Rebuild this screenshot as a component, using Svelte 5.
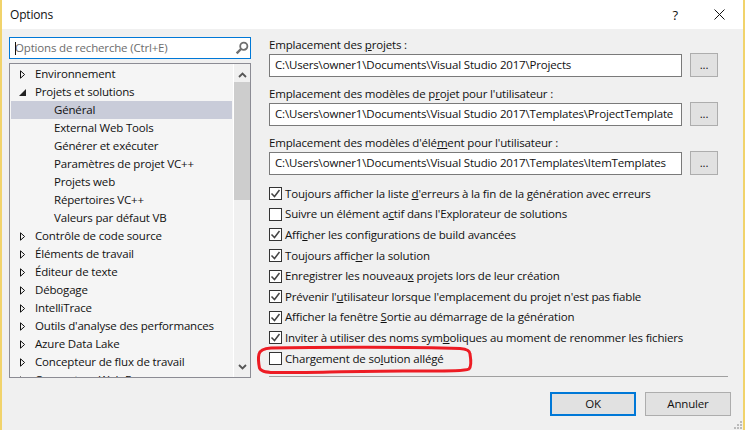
<script>
  const tree = [
    { t: 'Environnement', k: 'c' },
    { t: 'Projets et solutions', k: 'o' },
    { t: 'Général', k: 'l', s: true },
    { t: 'External Web Tools', k: 'l' },
    { t: 'Générer et exécuter', k: 'l' },
    { t: 'Paramètres de projet VC++', k: 'l' },
    { t: 'Projets web', k: 'l' },
    { t: 'Répertoires VC++', k: 'l' },
    { t: 'Valeurs par défaut VB', k: 'l' },
    { t: 'Contrôle de code source', k: 'c' },
    { t: 'Éléments de travail', k: 'c' },
    { t: 'Éditeur de texte', k: 'c' },
    { t: 'Débogage', k: 'c' },
    { t: 'IntelliTrace', k: 'c' },
    { t: "Outils d'analyse des performances", k: 'c' },
    { t: 'Azure Data Lake', k: 'c' },
    { t: 'Concepteur de flux de travail', k: 'c' },
    { t: 'Concepteur Web Forms', k: 'c' }
  ];
  const paths = [
    { a: 'Emplacement des ', u: 'p', b: 'rojets :', v: 'C:\\Users\\owner1\\Documents\\Visual Studio 2017\\Projects' },
    { a: 'Emplacement des modèles de p', u: 'r', b: "ojet pour l'utilisateur :", v: 'C:\\Users\\owner1\\Documents\\Visual Studio 2017\\Templates\\ProjectTemplate' },
    { a: "Emplacement des modèles d'élé", u: 'm', b: "ent pour l'utilisateur :", v: 'C:\\Users\\owner1\\Documents\\Visual Studio 2017\\Templates\\ItemTemplates' }
  ];
  const checks = [
    { a: 'Toujours afficher la liste ', u: 'd', b: "'erreurs à la fin de la génération avec erreurs", c: true },
    { a: 'Suivre un élément a', u: 'c', b: "tif dans l'Explorateur de solutions", c: false },
    { a: 'Affi', u: 'c', b: 'her les configurations de build avancées', c: true },
    { a: 'Toujours affic', u: 'h', b: 'er la solution', c: true },
    { a: 'Enregistrer les nouveau', u: 'x', b: ' projets lors de leur création', c: true },
    { a: "Prévenir l'", u: 'u', b: "tilisateur lorsque l'emplacement du projet n'est pas fiable", c: true },
    { a: 'Afficher la fenêtre ', u: 'S', b: 'ortie au démarrage de la génération', c: true },
    { a: 'Inviter à utiliser des noms sym', u: 'b', b: 'oliques au moment de renommer les fichiers', c: true },
    { a: 'Chargement de so', u: 'l', b: 'ution allégé', c: false }
  ];
</script>

<div class="dialog">
  <header class="titlebar">
    <span class="title">Options</span>
    <span class="help">?</span>
    <svg class="close" width="11" height="11" viewBox="0 0 11 11"><path d="M.5 .5l10 10M10.5 .5l-10 10" stroke="#111" stroke-width="1" fill="none"/></svg>
  </header>

  <div class="body">
    <div class="main">
      <aside class="left">
        <div class="search">
          <span class="caret"></span>
          <span class="ph">Options de recherche (Ctrl+E)</span>
          <svg class="lens" width="14" height="14" viewBox="0 0 14 14"><circle cx="8.8" cy="5.2" r="3.6" fill="none" stroke="#6f6f6f" stroke-width="1.8"/><path d="M6 8L1.7 12.3" stroke="#6f6f6f" stroke-width="2.4" fill="none"/></svg>
        </div>
        <div class="tree">
          <div class="rows">
            {#each tree as r}
              <div class="row" class:sel={r.s} class:leaf={r.k === 'l'}>
                {#if r.k === 'c'}
                  <svg class="arrow" width="7" height="9" viewBox="0 0 7 9"><path d="M1.5 .8v7.4L5.6 4.5z" fill="#f5f5f5" stroke="#111" stroke-width="1"/></svg>
                {:else if r.k === 'o'}
                  <svg class="arrow" width="7" height="9" viewBox="0 0 7 9"><path d="M0 8h7V1z" fill="#222"/></svg>
                {/if}
                <span>{r.t}</span>
              </div>
            {/each}
          </div>
          <div class="scroll">
            <svg class="chev" width="9" height="6" viewBox="0 0 9 6"><path d="M1 5l3.5-3.5L8 5" fill="none" stroke="#555" stroke-width="1.8"/></svg>
            <div class="thumb"></div>
            <svg class="chev down" width="9" height="6" viewBox="0 0 9 6"><path d="M1 1l3.5 3.5L8 1" fill="none" stroke="#555" stroke-width="1.8"/></svg>
          </div>
        </div>
      </aside>

      <section class="right">
        <div class="paths">
          {#each paths as p}
            <div class="path">
              <div class="plabel">{p.a}<u>{p.u}</u>{p.b}</div>
              <div class="pline">
                <div class="input">{p.v}</div>
                <div class="dots">...</div>
              </div>
            </div>
          {/each}
        </div>
        <div class="checks">
          {#each checks as c}
            <div class="check">
              <span class="box">
                {#if c.c}
                  <svg width="11" height="11" viewBox="0 0 11 11"><path d="M1.5 5.5l3 3 5-6.5" fill="none" stroke="#444" stroke-width="1.5"/></svg>
                {/if}
              </span>
              <span>{c.a}<u>{c.u}</u>{c.b}</span>
            </div>
          {/each}
        </div>
        <svg class="circle" width="222" height="32" viewBox="0 0 222 32"><path d="M6 9C7 5 12 3.5 18 3C70 2 160 2 207 3.5C213 4 217 5 217 9C218 15 218 22 216 24C211 26.5 190 26 150 26C100 26 50 28 30 27.5C15 28 8 27 6.5 23C5.5 18 5 13 6 9Z" fill="none" stroke="#ed1c24" stroke-width="3"/></svg>
      </section>
    </div>

    <div class="sep"></div>
    <footer class="foot">
      <div class="btn ok">OK</div>
      <div class="btn">Annuler</div>
    </footer>
    <svg class="grip" width="9" height="9" viewBox="0 0 9 9"><path d="M6 0h2v2H6zM3 3h2v2H3zM6 3h2v2H6zM0 6h2v2H0zM3 6h2v2H3zM6 6h2v2H6z" fill="#bbb"/></svg>
  </div>
</div>

<style>
  :global(body) { margin: 0; }
  .dialog {
    width: 745px; height: 430px; box-sizing: border-box;
    border-left: 2px solid #f1d36b; border-right: 2px solid #f1d36b;
    display: flex; flex-direction: column; overflow: hidden;
    font: 11.5px/16px "Open Sans", sans-serif; color: #111;
    letter-spacing: -0.17px;
  }
  .titlebar { height: 29px; background: #fff; display: flex; align-items: center; flex: none; }
  .title { margin-left: 8px; font-size: 12px; }
  .help { margin-left: auto; margin-right: 36px; font-size: 13px; }
  .close { margin-right: 18px; }
  .body { flex: 1; background: #f0f0f0; position: relative; }
  .main { display: flex; padding: 8px 0 0 7px; height: 340px; box-sizing: border-box; }
  .left { width: 242px; flex: none; }
  .search {
    height: 22px; box-sizing: border-box; border: 1px solid #0078d7; background: #fff;
    display: flex; align-items: center; position: relative; padding-left: 5px;
  }
  .caret { position: absolute; left: 5px; top: 4px; width: 1px; height: 13px; background: #111; }
  .ph { color: #6d6d6d; }
  .lens { margin-left: auto; margin-right: 1px; }
  .tree {
    margin-top: 4px; height: 315px; box-sizing: border-box; border: 1px solid #8c8c94;
    background: #f5f5f5; display: flex; overflow: hidden;
  }
  .rows { flex: 1; padding: 1px 1px 0 1px; min-width: 0; }
  .row { height: 18px; line-height: 18px; display: flex; align-items: center; padding-left: 24px; position: relative; white-space: nowrap; }
  .row.leaf { padding-left: 43px; }
  .row.sel { background: #c9ccd9; }
  .arrow { position: absolute; left: 8px; top: 5px; }
  .scroll { width: 16px; flex: none; border-left: 1px solid #fff; background: #f0f0f0; position: relative; display: flex; flex-direction: column; align-items: center; }
  .chev { margin-top: 8px; flex: none; }
  .thumb { width: 16px; height: 118px; background: #cdcdcd; margin-top: 4px; flex: none; }
  .chev.down { margin-top: auto; margin-bottom: 7px; }
  .right { margin-left: 18px; width: 461px; flex: none; position: relative; }
  .paths { display: flex; flex-direction: column; gap: 1px; }
  .path { height: 48px; }
  .plabel { height: 17px; line-height: 16px; white-space: nowrap; }
  .pline { display: flex; gap: 8px; align-items: flex-start; }
  .input {
    width: 413px; height: 23px; box-sizing: border-box; border: 1px solid #7a7a7a; background: #fff;
    padding-left: 5px; line-height: 20px; white-space: nowrap; overflow: hidden;
  }
  .dots {
    width: 28px; height: 24px; box-sizing: border-box; border: 1px solid #adadad; background: #e1e1e1;
    text-align: center; line-height: 22px; margin-top: -1px;
  }
  .checks { margin-top: 0.5px; display: flex; flex-direction: column; }
  .check { height: 20.6px; display: flex; align-items: center; gap: 3px; white-space: nowrap; }
  .box {
    width: 13px; height: 13px; box-sizing: border-box; border: 1px solid #333; background: #fff;
    flex: none; display: flex; align-items: center; justify-content: center;
  }
  .box svg { display: block; }
  .circle { position: absolute; left: -16px; top: 308px; pointer-events: none; }
  .sep { height: 1px; background: #a0a0a0; width: 459px; margin: 7px 0 0 267px; }
  .foot { display: flex; justify-content: flex-end; gap: 9px; margin-top: 15px; margin-right: 12px; }
  .btn {
    width: 86px; height: 24px; box-sizing: border-box; border: 1px solid #adadad; background: #e1e1e1;
    text-align: center; line-height: 22px;
  }
  .btn.ok { border: 2px solid #0078d7; line-height: 20px; }
  .grip { position: absolute; right: 0; bottom: 0; }
</style>
